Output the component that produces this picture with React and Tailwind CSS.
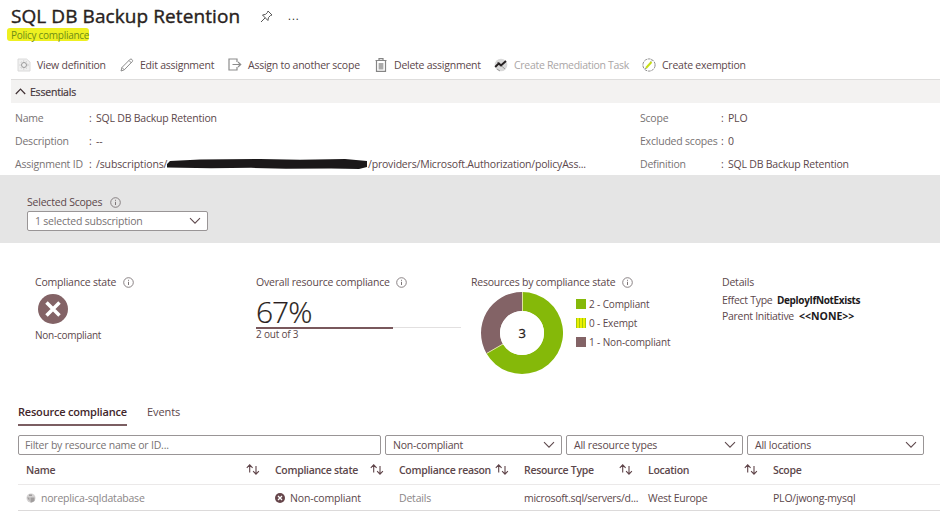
import React from "react";

function Info({ className = "" }) {
  return (
    <svg className={`size-[11px] shrink-0 ${className}`} viewBox="0 0 11 11" fill="none" stroke="#7d7577">
      <circle cx="5.5" cy="5.5" r="4.8" strokeWidth="0.9" />
      <path d="M5.5 4.8V8M5.5 2.8V3.8" />
    </svg>
  );
}

function Chevron() {
  return (
    <svg className="h-[8px] w-[12px] shrink-0" viewBox="0 0 12 8" fill="none" stroke="#5f4a4e" strokeWidth="1.1">
      <path d="M1 1.2l5 5 5-5" />
    </svg>
  );
}

function SortArrows() {
  return (
    <svg className="h-[11px] w-[14px] shrink-0" viewBox="0 0 14 11" fill="none" stroke="#5f4449" strokeWidth="1.1">
      <path d="M3.7 8.5V1M.8 3.8l2.9-2.9 2.9 2.9M10 2v8M7.1 7.2l2.9 2.9 2.9-2.9" />
    </svg>
  );
}

const glyphs = {
  view: (
    <>
      <path d="M1 1h8.5L13 4v9H1z" fill="#f0f0f0" stroke="#dadada" />
      <circle cx="7" cy="7" r="2.5" stroke="#999" />
      <circle cx="7" cy="7" r="4" stroke="#c0c0c0" strokeDasharray="1.2 1.7" />
    </>
  ),
  edit: <path d="M1 13l1-3.6L10.2 1.2c1-.8 3 1 2.3 2.1L4.3 11.8zM9 2.5l2.5 2.5M2 9.5l2.3 2.3" stroke="#8c8c8c" />,
  assign: <path d="M9 4V1H1v11h8V9M4.5 6.5h8M10 4l2.7 2.5L10 9" stroke="#8c8c8c" strokeWidth="1.2" />,
  trash: (
    <>
      <path d="M1.5 2.5h11M5 2.3V.7h4v1.6M2.5 2.5v10.8h9V2.5" stroke="#858585" strokeWidth="1.2" />
      <path d="M4.6 5h4.8v6.5H4.6z" fill="#aaa" />
    </>
  ),
  remediate: (
    <>
      <circle cx="7" cy="7" r="6.3" fill="#d9d9d9" />
      <path d="M3 4l8 7M3 11l3 2" stroke="#999" />
      <path d="M1.2 9l3.6-3.6 2.2 2L12 3" stroke="#262122" strokeWidth="2" />
    </>
  ),
  exempt: (
    <>
      <circle cx="7" cy="7" r="6.1" stroke="#8d8d8d" strokeDasharray="3 .8" />
      <path d="M4 10l5.5-6" stroke="#c6dd16" strokeWidth="2" />
      <path d="M4 10l-.5 1M9 3.5l1-1" stroke="#777" />
    </>
  ),
};

function Tool({ glyph, label, width, muted }) {
  return (
    <button className={`flex shrink-0 items-center ${width}`}>
      <svg className="size-[14px] shrink-0" viewBox="0 0 14 14" fill="none">
        {glyphs[glyph]}
      </svg>
      <span className={`ml-[6px] ${muted ? "tracking-[-0.3px] text-[#aaa6a6]" : "tracking-[-0.24px]"}`}>{label}</span>
    </button>
  );
}

function Field({ label, value, labelWidth }) {
  return (
    <div className="flex h-[23px] items-center">
      <span className={`${labelWidth} shrink-0 text-[#777273]`}>{label}</span>
      <span className="w-[7px] shrink-0">:</span>
      <span>{value}</span>
    </div>
  );
}

function Select({ label, width, muted }) {
  return (
    <div className={`flex h-[20px] shrink-0 items-center justify-between rounded-[2px] border border-[#999596] bg-white pr-[6px] pl-[7px] ${width}`}>
      <span className={muted ? "text-[#777273]" : ""}>{label}</span>
      <Chevron />
    </div>
  );
}

function Heading({ children, width }) {
  return (
    <div className={`flex shrink-0 items-center justify-between font-semibold tracking-[-0.3px] ${width}`}>
      <span>{children}</span>
      <SortArrows />
    </div>
  );
}

export default function App() {
  return (
    <div className="h-[524px] w-[940px] overflow-hidden bg-white font-['Open_Sans','Noto_Sans',sans-serif] text-[10.5px] leading-[14px] tracking-[-0.21px] whitespace-nowrap text-[#5c474b]">
      <header className="h-[51px]">
        <div className="flex h-[28px] items-center pt-[4px] pl-[11px] text-[#291f21]">
          <h1 className="w-[249px] text-[19px] leading-[24px] tracking-[0.08px] [-webkit-text-stroke:0.4px_#291f21]">SQL DB Backup Retention</h1>
          <svg className="size-[13px]" viewBox="0 0 13 13" fill="none" stroke="#555">
            <path d="M8 1l4 4-1.5.5-2 2-.6 3L2.5 5l3-.6 2-2zM5.2 7.8L1 12" />
          </svg>
          <span className="ml-[15px] text-[11px] leading-[12px] tracking-[1px]">...</span>
        </div>
        <div className="ml-[7px] flex h-[13px] w-[82px] items-center rounded-[3px] bg-[#eef021] pl-[4px] text-[10px] tracking-[-0.27px] text-[#6f8d16]">Policy compliance</div>
      </header>

      <nav className="flex h-[28px] items-center pl-[17px]">
        <Tool glyph="view" label="View definition" width="w-[103px]" />
        <Tool glyph="edit" label="Edit assignment" width="w-[108px]" />
        <Tool glyph="assign" label="Assign to another scope" width="w-[146px]" />
        <Tool glyph="trash" label="Delete assignment" width="w-[120px]" />
        <Tool glyph="remediate" label="Create Remediation Task" width="w-[148px]" muted />
        <Tool glyph="exempt" label="Create exemption" width="w-[110px]" />
      </nav>

      <section className="ml-[11px] flex h-[24px] items-center gap-[4px] border-t border-[#dedddc] bg-[#f3f2f1] pl-[4px] text-[#44353a] [-webkit-text-stroke:0.2px_#44353a]">
        <svg className="h-[7px] w-[11px]" viewBox="0 0 11 7" fill="none" stroke="#3f3033" strokeWidth="1.2">
          <path d="M.8 6l4.7-4.8L10.2 6" />
        </svg>
        Essentials
      </section>

      <section className="flex h-[72px] pt-[3px] pl-[15px]">
        <div className="w-[625px]">
          <Field label="Name" value="SQL DB Backup Retention" labelWidth="w-[74px]" />
          <Field label="Description" value="--" labelWidth="w-[74px]" />
          <Field
            label="Assignment ID"
            labelWidth="w-[74px]"
            value={
              <span className="flex items-center">
                <span className="w-[71px] tracking-[-0.12px]">/subscriptions/</span>
                <svg className="h-[12px] w-[201px]" viewBox="0 0 201 12">
                  <path d="M0 6l3-3 30-1.5 60-.5 40 .8 45-.8 22 2v6l-8 2-28-.5-45 .3-35-1-40 .5-44-.8z" fill="#1b1819" />
                </svg>
                <span className="tracking-[-0.19px]">/providers/Microsoft.Authorization/policyAss...</span>
              </span>
            }
          />
        </div>
        <div>
          <Field label="Scope" value="PLO" labelWidth="w-[81px]" />
          <Field label="Excluded scopes" value="0" labelWidth="w-[81px]" />
          <Field label="Definition" value="SQL DB Backup Retention" labelWidth="w-[81px]" />
        </div>
      </section>

      <section className="h-[68px] bg-[#e5e5e5] pt-[20px] pl-[27px]">
        <div className="mb-[2px] flex h-[14px] items-center">
          <span className="w-[83px]">Selected Scopes</span>
          <Info />
        </div>
        <Select label="1 selected subscription" width="w-[181px]" muted />
      </section>

      <section className="flex h-[157px] pt-[32px] pl-[35px]">
        <div className="w-[221px]">
          <div className="flex h-[14px] items-center">
            <span className="w-[88px]">Compliance state</span>
            <Info />
          </div>
          <svg className="mt-[5px] ml-[3px] size-[30px]" viewBox="0 0 30 30">
            <circle cx="15" cy="15" r="15" fill="#836366" />
            <path d="M8.5 8.5l13 13M21.5 8.5l-13 13" stroke="#fff" strokeWidth="3.5" />
          </svg>
          <div className="mt-[4px] text-[10px] tracking-[-0.25px]">Non-compliant</div>
        </div>
        <div className="w-[215px]">
          <div className="flex h-[14px] items-center">
            <span className="w-[140px]">Overall resource compliance</span>
            <Info />
          </div>
          <div className="h-[38px] pt-[8px] text-[30px] leading-[30px] font-light tracking-[-1px] text-[#291e20] [-webkit-text-stroke:0.2px_#291e20]">67%</div>
          <div className="flex h-[2px] w-[205px] items-start">
            <div className="h-[2px] w-[137px] bg-[#79585c]" />
            <div className="h-px flex-1 bg-[#e2e0e0]" />
          </div>
          <div className="text-[10px] leading-[10px] tracking-[-0.2px]">2 out of 3</div>
        </div>
        <div className="w-[251px]">
          <div className="flex h-[14px] items-center">
            <span className="w-[151px]">Resources by compliance state</span>
            <Info />
          </div>
          <div className="mt-[3px] ml-[10px] flex">
            <svg className="size-[82px]" viewBox="0 0 82 82">
              <path d="M41 0A41 41 0 1 1 5.5 61.5L22 52A22 22 0 1 0 41 19z" fill="#85b909" />
              <path d="M41 0v19A22 22 0 0 0 22 52L5.5 61.5A41 41 0 0 1 41 0z" fill="#836366" />
              <path d="M41.5 0v19M22 52L5.5 61.5" stroke="#e0e5a0" strokeWidth="1" />
              <circle cx="41" cy="41" r="22" fill="#fff" />
              <text x="41" y="45.5" textAnchor="middle" fontSize="13" fill="#291e20" stroke="#291e20" strokeWidth="0.3">3</text>
            </svg>
            <div className="ml-[13px] flex flex-col gap-[5px] pt-[5px] text-[10px] tracking-[-0.12px]">
              <div className="flex items-center gap-[3px]"><i className="size-[10px] bg-[#85b909]" />2 - Compliant</div>
              <div className="flex items-center gap-[3px]"><i className="size-[10px] bg-[repeating-linear-gradient(90deg,#a6c90a_0_1px,#eaf000_1px_3px)]" />0 - Exempt</div>
              <div className="flex items-center gap-[3px]"><i className="size-[10px] bg-[#836366]" />1 - Non-compliant</div>
            </div>
          </div>
        </div>
        <div>
          <div>Details</div>
          <div className="mt-[4px] flex">
            <span className="w-[55px] tracking-[-0.3px]">Effect Type</span>
            <b className="text-[10px] tracking-[-0.35px] text-[#21191b]">DeployIfNotExists</b>
          </div>
          <div className="mt-[2px] flex">
            <span className="w-[77px] tracking-[-0.3px]">Parent Initiative</span>
            <b className="tracking-normal text-[#21191b]">&lt;&lt;NONE&gt;&gt;</b>
          </div>
        </div>
      </section>

      <section className="pl-[18px]">
        <div className="flex h-[26px] text-[11px] leading-[24px]">
          <div className="mr-[20px] w-[109px] border-b-2 border-[#7b5e62] font-semibold tracking-[-0.2px] text-[#42262b]">Resource compliance</div>
          <div className="tracking-[-0.1px]">Events</div>
        </div>
        <div className="mt-[9px] flex gap-[4px]">
          <div className="flex h-[20px] w-[363px] items-center rounded-[2px] border border-[#999596] pl-[6px] text-[#777273]">Filter by resource name or ID...</div>
          <Select label="Non-compliant" width="w-[177px]" />
          <Select label="All resource types" width="w-[177px]" />
          <Select label="All locations" width="w-[177px]" />
        </div>
        <div className="flex h-[30px] items-center border-b border-[#ebe9e9] pl-[8px]">
          <Heading width="w-[234px] mr-[15px]">Name</Heading>
          <Heading width="w-[109px] mr-[15px]">Compliance state</Heading>
          <Heading width="w-[110px] mr-[15px]">Compliance reason</Heading>
          <Heading width="w-[109px] mr-[15px]">Resource Type</Heading>
          <Heading width="w-[110px] mr-[15px]">Location</Heading>
          <span className="font-semibold tracking-[-0.32px]">Scope</span>
        </div>
        <div className="flex h-[26px] items-center border-b border-[#dcdada] pt-[1px] pl-[8px]">
          <svg className="mr-[5px] size-[10px]" viewBox="0 0 10 10">
            <circle cx="5" cy="5" r="4.5" fill="#d2d0d0" />
            <path d="M4.5 4.5h4V8l-3 1.5H4.5zM1 4.5h2.5V8M3 1.5h3V3H3z" fill="#a09d9d" />
          </svg>
          <span className="w-[234px] text-[#8b8687]">noreplica-sqldatabase</span>
          <svg className="mr-[5px] size-[10px]" viewBox="0 0 10 10">
            <circle cx="5" cy="5" r="5" fill="#66464b" />
            <path d="M3 3l4 4M7 3L3 7" stroke="#fff" strokeWidth="1.3" />
          </svg>
          <span className="w-[109px] tracking-[-0.15px]">Non-compliant</span>
          <span className="w-[125px] text-[#8b8687]">Details</span>
          <span className="w-[124px] tracking-[-0.28px]">microsoft.sql/servers/d...</span>
          <span className="w-[125px] tracking-[-0.26px]">West Europe</span>
          <span>PLO/jwong-mysql</span>
        </div>
      </section>
    </div>
  );
}
